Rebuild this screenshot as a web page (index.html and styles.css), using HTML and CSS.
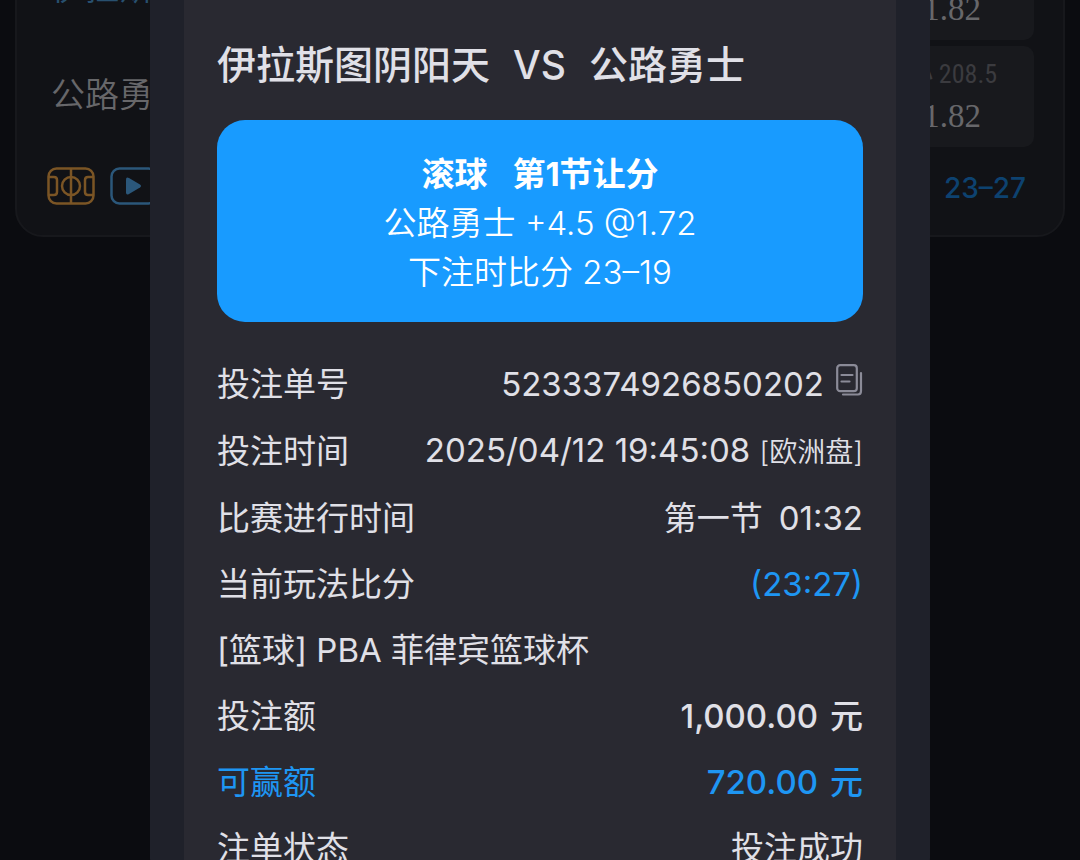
FILE: index.html
```html
<!DOCTYPE html>
<html lang="zh-CN">
<head>
<meta charset="utf-8">
<meta name="viewport" content="width=device-width, initial-scale=1">
<title>注单详情</title>
<link rel="stylesheet" href="styles.css">
</head>
<body>
<main class="match-card">
  <div class="match-body">
    <div class="teams">
      <div class="team team-home">伊拉斯图阴阳天</div>
      <div class="team">公路勇士</div>
    </div>
    <div class="odds-list">
      <button class="odds" type="button"><span class="odds-line">大 208.5</span><span class="odds-value">1.82</span></button>
      <button class="odds" type="button"><span class="odds-line">小 208.5</span><span class="odds-value">1.82</span></button>
    </div>
  </div>
  <div class="match-footer">
    <svg class="icon-court" width="48" height="38" viewBox="0 0 48 38" fill="none" stroke="currentColor" stroke-width="2.5" aria-hidden="true">
      <rect x="1.500" y="1.500" width="45" height="35" rx="8"/>
      <path d="M24 1v36M1 10h6q3 0 3 3v12q0 3-3 3H1M47 10h-6q-3 0-3 3v12q0 3 3 3h6"/>
      <circle cx="24" cy="19" r="9"/>
    </svg>
    <svg class="icon-play" width="48" height="38" viewBox="0 0 48 38" fill="none" stroke="currentColor" stroke-width="2.5" aria-hidden="true">
      <rect x="1.500" y="1.500" width="45" height="35" rx="8"/>
      <path d="M16 12.500q0-3 3-1.500l11 6.500q2 1.500 0 3l-11 6.500q-3 1.500-3-1.500z" fill="currentColor" stroke="none"/>
    </svg>
    <span class="live-score">23–27</span>
  </div>
</main>

<div class="overlay">
  <section class="dialog" role="dialog" aria-labelledby="bet-title">
    <div class="panel">
      <h1 class="title" id="bet-title"><span>伊拉斯图阴阳天</span><span>VS</span><span>公路勇士</span></h1>
      <div class="pick">
        <div class="pick-type"><span>滚球</span><span>第1节让分</span></div>
        <div>公路勇士 +4.5 @1.72</div>
        <div>下注时比分 23–19</div>
      </div>
      <dl class="details">
        <div class="row">
          <dt>投注单号</dt>
          <dd class="order"><span>5233374926850202</span>
            <button class="copy" type="button" aria-label="复制">
              <svg width="27" height="32" viewBox="0 0 27 32" fill="none" stroke="currentColor" stroke-width="2.2" stroke-linecap="round" aria-hidden="true">
                <rect x="1.200" y="1.200" width="19.600" height="26" rx="3"/>
                <path d="M5.500 11h11M5.500 17.500h8M25 9v18q0 3.500-3 3.500H7"/>
              </svg>
            </button>
          </dd>
        </div>
        <div class="row"><dt>投注时间</dt><dd>2025/04/12 19:45:08 <small class="market">[欧洲盘]</small></dd></div>
        <div class="row"><dt>比赛进行时间</dt><dd class="period"><span>第一节</span><span>01:32</span></dd></div>
        <div class="row"><dt>当前玩法比分</dt><dd class="accent">(23:27)</dd></div>
        <div class="row"><dt>[篮球] PBA 菲律宾篮球杯</dt></div>
        <div class="row"><dt>投注额</dt><dd class="amount"><span>1,000.00</span><span>元</span></dd></div>
        <div class="row accent"><dt>可赢额</dt><dd class="amount"><span>720.00</span><span>元</span></dd></div>
        <div class="row"><dt>注单状态</dt><dd>投注成功</dd></div>
      </dl>
    </div>
  </section>
</div>
</body>
</html>
```
FILE: styles.css
```css
* { box-sizing: border-box; }

body {
  margin: 0;
  height: 100vh;
  overflow: hidden;
  position: relative;
  background: #0b0c10;
  color: #e0e0e7;
  font-family: Inter, "Noto Sans CJK SC", sans-serif;
  font-size: 33px;
}

button {
  margin: 0;
  padding: 0;
  border: 0;
  background: none;
  color: inherit;
  font: inherit;
}

/* Match list behind the dialog, scrolled past its first rows */
.match-card {
  margin: -63px 15px 0;
  padding: 0 29px 30px 30px;
  border: 2px solid #17181c;
  border-radius: 28px;
  background: #111216;
}

.match-body {
  display: grid;
  grid-template-columns: 1fr 164px;
}

.teams,
.odds-list {
  display: grid;
  grid-auto-rows: 101px;
  gap: 6px;
}

.team {
  display: flex;
  align-items: center;
  padding: 0 0 8px 4px;
  color: #67676a;
  font-size: 34px;
  font-weight: 350;
}

.team-home { color: #28506f; }

.odds {
  display: flex;
  flex-direction: column;
  align-items: center;
  justify-content: center;
  padding-bottom: 6px;
  border-radius: 10px;
  background: #18191d;
}

.odds-line {
  color: #3b3b3f;
  font-family: "Liberation Sans Narrow", "Roboto Condensed", Roboto, "Noto Sans CJK SC", sans-serif;
  font-size: 26px;
  line-height: 44px;
}

.odds-value {
  color: #67676a;
  font-family: "Liberation Serif", serif;
  line-height: 40px;
}

.match-footer {
  display: flex;
  align-items: center;
  gap: 15px;
  margin-top: 20px;
}

.icon-court { color: #7b5525; }
.icon-play { color: #2b577a; }

.live-score {
  margin-left: auto;
  padding: 4px 8px 0 0;
  color: #0d4270;
  font-size: 28px;
  line-height: 34px;
  font-weight: 500;
}

.overlay {
  position: absolute;
  inset: 0;
  display: flex;
  justify-content: center;
  align-items: flex-start;
  overflow: hidden;
}

.dialog {
  width: 100%;
  max-width: 780px;
  padding: 0 34px;
  border-radius: 0 0 24px 24px;
  background: #1f212a;
}

.panel {
  padding: 36px 33px 0;
  background: #292931;
}

.title {
  display: flex;
  gap: 23px;
  margin: 0 0 26px;
  font-size: 39px;
  font-weight: 500;
  line-height: 58px;
  white-space: nowrap;
}

.pick {
  padding: 30px 24px 25px;
  border-radius: 28px;
  background: #189bff;
  color: #fff;
  font-weight: 350;
  line-height: 49px;
  text-align: center;
}

.pick-type {
  display: flex;
  justify-content: center;
  gap: 25px;
  font-weight: 700;
}

.details { margin: 29px 0 0; }

.row {
  display: flex;
  justify-content: space-between;
  align-items: center;
  line-height: 66px;
  white-space: nowrap;
}

.row dt,
.row dd { margin: 0; }

.order,
.period,
.row .amount { display: flex; }

.order { gap: 12px; }
.period { gap: 16px; }
.amount { gap: 12px; font-weight: 500; }

.copy {
  display: flex;
  align-items: center;
  padding-bottom: 9px;
  color: #8b8b98;
}

.market {
  font-size: 28px;
  font-weight: 350;
}

.accent { color: #1e96f3; }
```
